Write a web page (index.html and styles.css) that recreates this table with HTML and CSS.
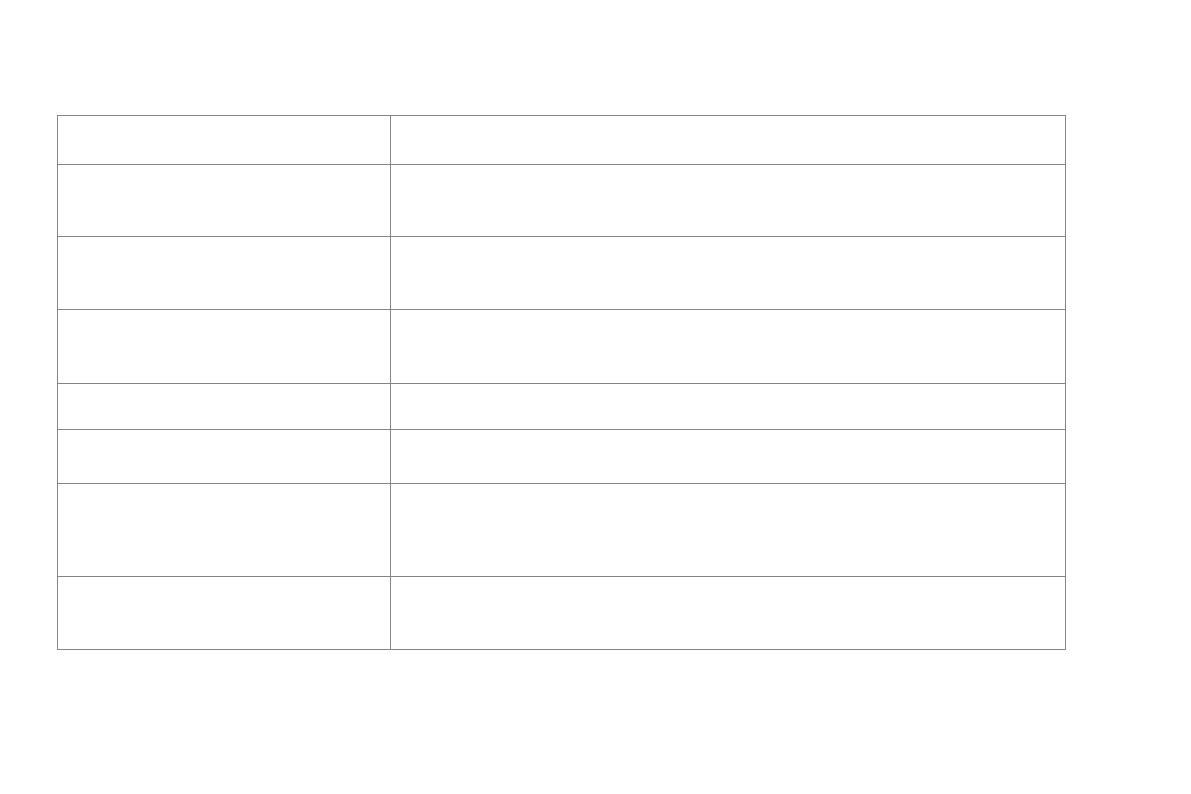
FILE: index.html
```html
<!DOCTYPE html>
<html lang="en">
<head>
<meta charset="utf-8">
<title>Table</title>
<link rel="stylesheet" href="styles.css">
</head>
<body>
<div class="page">
  <div class="grid">
    <div class="cell r1"></div><div class="cell r1"></div>
    <div class="cell r2"></div><div class="cell r2"></div>
    <div class="cell r3"></div><div class="cell r3"></div>
    <div class="cell r4"></div><div class="cell r4"></div>
    <div class="cell r5"></div><div class="cell r5"></div>
    <div class="cell r6"></div><div class="cell r6"></div>
    <div class="cell r7"></div><div class="cell r7"></div>
    <div class="cell r8"></div><div class="cell r8"></div>
  </div>
</div>
</body>
</html>
```

FILE: styles.css
```css
* { box-sizing: border-box; }
html, body { margin: 0; padding: 0; background: #ffffff; }
body { font-family: "Liberation Sans", Arial, sans-serif; }
.page { padding: 115px 0 0 57px; }
.grid {
  display: grid;
  grid-template-columns: 333px 675px;
  width: max-content;
  border-top: 1px solid #858585;
  border-left: 1px solid #858585;
}
.cell {
  border-right: 1px solid #858585;
  border-bottom: 1px solid #858585;
}
.r1 { height: 49px; }
.r2 { height: 72px; }
.r3 { height: 73px; }
.r4 { height: 74px; }
.r5 { height: 46px; }
.r6 { height: 54px; }
.r7 { height: 93px; }
.r8 { height: 73px; }
```
